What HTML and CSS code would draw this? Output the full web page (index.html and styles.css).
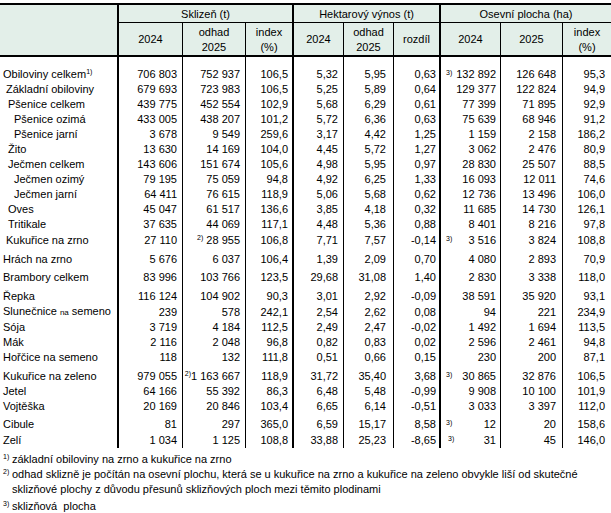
FILE: index.html
```html
<!DOCTYPE html>
<html lang="cs">
<head>
<meta charset="utf-8">
<title>Sklizeň</title>
<link rel="stylesheet" href="styles.css">
</head>
<body>
<table class="data">
  <colgroup>
    <col class="w1"><col class="w2"><col class="w3"><col class="w4"><col class="w5">
    <col class="w6"><col class="w7"><col class="w8"><col class="w9"><col class="w10">
  </colgroup>
  <thead>
    <tr class="h1">
      <th rowspan="2" class="corner"></th>
      <th colspan="3" class="grp">Sklizeň (t)</th>
      <th colspan="3" class="grp">Hektarový výnos (t)</th>
      <th colspan="3" class="grp">Osevní plocha (ha)</th>
    </tr>
    <tr class="h2">
      <th class="thick">2024</th>
      <th class="thin">odhad<br>2025</th>
      <th class="thin">index<br>(%)</th>
      <th class="thick">2024</th>
      <th class="thin">odhad<br>2025</th>
      <th class="thin">rozdíl</th>
      <th class="thick">2024</th>
      <th class="thin">2025</th>
      <th class="thin">index<br>(%)</th>
    </tr>
  </thead>
  <tbody>
    <tr class="first"><td class="name i0">Obiloviny celkem<span class="sup">1)</span></td><td>706 803</td><td>752 937</td><td>106,5</td><td>5,32</td><td>5,95</td><td>0,63</td><td><span class="fn">3)</span>132 892</td><td>126 648</td><td>95,3</td></tr>
    <tr><td class="name i1">Základní obiloviny</td><td>679 693</td><td>723 983</td><td>106,5</td><td>5,25</td><td>5,89</td><td>0,64</td><td>129 377</td><td>122 824</td><td>94,9</td></tr>
    <tr><td class="name i2">Pšenice celkem</td><td>439 775</td><td>452 554</td><td>102,9</td><td>5,68</td><td>6,29</td><td>0,61</td><td>77 399</td><td>71 895</td><td>92,9</td></tr>
    <tr><td class="name i3">Pšenice ozimá</td><td>433 005</td><td>438 207</td><td>101,2</td><td>5,72</td><td>6,36</td><td>0,63</td><td>75 639</td><td>68 946</td><td>91,2</td></tr>
    <tr><td class="name i3">Pšenice jarní</td><td>3 678</td><td>9 549</td><td>259,6</td><td>3,17</td><td>4,42</td><td>1,25</td><td>1 159</td><td>2 158</td><td>186,2</td></tr>
    <tr><td class="name i2">Žito</td><td>13 630</td><td>14 169</td><td>104,0</td><td>4,45</td><td>5,72</td><td>1,27</td><td>3 062</td><td>2 476</td><td>80,9</td></tr>
    <tr><td class="name i2">Ječmen celkem</td><td>143 606</td><td>151 674</td><td>105,6</td><td>4,98</td><td>5,95</td><td>0,97</td><td>28 830</td><td>25 507</td><td>88,5</td></tr>
    <tr><td class="name i3">Ječmen ozimý</td><td>79 195</td><td>75 059</td><td>94,8</td><td>4,92</td><td>6,25</td><td>1,33</td><td>16 093</td><td>12 011</td><td>74,6</td></tr>
    <tr><td class="name i3">Ječmen jarní</td><td>64 411</td><td>76 615</td><td>118,9</td><td>5,06</td><td>5,68</td><td>0,62</td><td>12 736</td><td>13 496</td><td>106,0</td></tr>
    <tr><td class="name i2">Oves</td><td>45 047</td><td>61 517</td><td>136,6</td><td>3,85</td><td>4,18</td><td>0,32</td><td>11 685</td><td>14 730</td><td>126,1</td></tr>
    <tr><td class="name i2">Tritikale</td><td>37 635</td><td>44 069</td><td>117,1</td><td>4,48</td><td>5,36</td><td>0,88</td><td>8 401</td><td>8 216</td><td>97,8</td></tr>
    <tr class="p1"><td class="name i1">Kukuřice na zrno</td><td>27 110</td><td><span class="sup">2)</span> 28 955</td><td>106,8</td><td>7,71</td><td>7,57</td><td>-0,14</td><td><span class="fn">3)</span>3 516</td><td>3 824</td><td>108,8</td></tr>
    <tr class="p4"><td class="name i0">Hrách na zrno</td><td>5 676</td><td>6 037</td><td>106,4</td><td>1,39</td><td>2,09</td><td>0,70</td><td>4 080</td><td>2 893</td><td>70,9</td></tr>
    <tr class="p3"><td class="name i0">Brambory celkem</td><td>83 996</td><td>103 766</td><td>123,5</td><td>29,68</td><td>31,08</td><td>1,40</td><td>2 830</td><td>3 338</td><td>118,0</td></tr>
    <tr class="p4"><td class="name i0">Řepka</td><td>116 124</td><td>104 902</td><td>90,3</td><td>3,01</td><td>2,92</td><td>-0,09</td><td>38 591</td><td>35 920</td><td>93,1</td></tr>
    <tr><td class="name i0">Slunečnice <span class="small">na</span> semeno</td><td>239</td><td>578</td><td>242,1</td><td>2,54</td><td>2,62</td><td>0,08</td><td>94</td><td>221</td><td>234,9</td></tr>
    <tr><td class="name i0">Sója</td><td>3 719</td><td>4 184</td><td>112,5</td><td>2,49</td><td>2,47</td><td>-0,02</td><td>1 492</td><td>1 694</td><td>113,5</td></tr>
    <tr><td class="name i0">Mák</td><td>2 116</td><td>2 048</td><td>96,8</td><td>0,82</td><td>0,83</td><td>0,02</td><td>2 596</td><td>2 461</td><td>94,8</td></tr>
    <tr><td class="name i0">Hořčice na semeno</td><td>118</td><td>132</td><td>111,8</td><td>0,51</td><td>0,66</td><td>0,15</td><td>230</td><td>200</td><td>87,1</td></tr>
    <tr class="p4"><td class="name i0">Kukuřice na zeleno</td><td>979 055</td><td><span class="sup">2)</span>1 163 667</td><td>118,9</td><td>31,72</td><td>35,40</td><td>3,68</td><td><span class="fn">3)</span>30 865</td><td>32 876</td><td>106,5</td></tr>
    <tr><td class="name i0">Jetel</td><td>64 166</td><td>55 392</td><td>86,3</td><td>6,48</td><td>5,48</td><td>-0,99</td><td>9 908</td><td>10 100</td><td>101,9</td></tr>
    <tr><td class="name i0">Vojtěška</td><td>20 169</td><td>20 846</td><td>103,4</td><td>6,65</td><td>6,14</td><td>-0,51</td><td>3 033</td><td>3 397</td><td>112,0</td></tr>
    <tr class="p3"><td class="name i0">Cibule</td><td>81</td><td>297</td><td>365,0</td><td>6,59</td><td>15,17</td><td>8,58</td><td><span class="fn">3)</span>12</td><td>20</td><td>158,6</td></tr>
    <tr class="p1"><td class="name i0">Zelí</td><td>1 034</td><td>1 125</td><td>108,8</td><td>33,88</td><td>25,23</td><td>-8,65</td><td><span class="fn fn-r">3)</span>31</td><td>45</td><td>146,0</td></tr>
  </tbody>
</table>
<div class="notes">
  <div class="note"><span class="mark">1)</span><span class="txt">základní obiloviny na zrno a kukuřice na zrno</span></div>
  <div class="note"><span class="mark">2)</span><span class="txt">odhad sklizně je počítán na osevní plochu, která se u kukuřice na zrno a kukuřice na zeleno obvykle liší od skutečné<br>sklizňové plochy z důvodu přesunů sklizňových ploch mezi těmito plodinami</span></div>
  <div class="note last"><span class="mark">3)</span><span class="txt">sklizňová&nbsp; plocha</span></div>
</div>
</body>
</html>
```
FILE: styles.css
```css
* { box-sizing: border-box; }

body {
  margin: 0;
  padding-top: 3px;
  background: #fff;
  color: #000;
  font-family: "Liberation Sans", Arial, sans-serif;
  font-size: 11px;
}

table.data {
  width: 611px;
  table-layout: fixed;
  border-collapse: separate;
  border-spacing: 0;
  border-top: 2px solid #000;
}

col.w1 { width: 117px; }
col.w2 { width: 65px; }
col.w3 { width: 63px; }
col.w4 { width: 47px; }
col.w5 { width: 51px; }
col.w6 { width: 50px; }
col.w7 { width: 46px; }
col.w8 { width: 61px; }
col.w9 { width: 62px; }
col.w10 { width: 49px; }

th {
  background: #e3efe9;
  font-weight: normal;
  text-align: center;
  padding: 0;
  line-height: 15px;
}

tr.h1 th { height: 18px; }
th.grp {
  border-left: 2px solid #000;
  border-bottom: 1px solid #000;
  vertical-align: middle;
  padding-top: 1px;
}
th.corner { border-bottom: 2px solid #000; }
tr.h2 th {
  height: 34px;
  border-bottom: 2px solid #000;
  vertical-align: middle;
  padding-top: 1px;
}
th.thick { border-left: 2px solid #000; }
th.thin { border-left: 1px solid #000; }

td {
  padding: 0 5px 0 0;
  line-height: 15px;
  text-align: right;
  white-space: nowrap;
  vertical-align: bottom;
}

td:nth-child(2), td:nth-child(5), td:nth-child(8) { border-left: 2px solid #000; }
td:nth-child(3), td:nth-child(4), td:nth-child(6),
td:nth-child(7), td:nth-child(9), td:nth-child(10) { border-left: 1px solid #000; }

td:nth-child(4) { padding-right: 4px; }
td:nth-child(6) { padding-right: 7px; }
td:nth-child(7) { padding-right: 3px; }
td:nth-child(8) { padding-right: 4px; padding-left: 5px; }
td:nth-child(9), td:nth-child(10) { padding-right: 6px; }

td.name { text-align: left; padding-right: 0; }
td.i0 { padding-left: 3px; }
td.i1 { padding-left: 6px; }
td.i2 { padding-left: 8px; }
td.i3 { padding-left: 14px; }

tr.first td { padding-top: 10px; }
tr.p1 td { padding-top: 1px; }
tr.p3 td { padding-top: 3px; }
tr.p4 td { padding-top: 4px; }

.sup {
  font-size: 7px;
  line-height: 0;
  vertical-align: 4px;
}

.fn {
  float: left;
  font-size: 7px;
  line-height: 9px;
  margin-top: 1px;
}
.fn-r { margin-left: 2px; }

.small { font-size: 8px; }

.notes { margin-top: 4px; }
.note {
  display: flex;
  line-height: 15px;
  white-space: nowrap;
}
.note.last { margin-top: 2px; }
.mark {
  width: 12px;
  padding-left: 3px;
  font-size: 7px;
  line-height: 10px;
}
```
